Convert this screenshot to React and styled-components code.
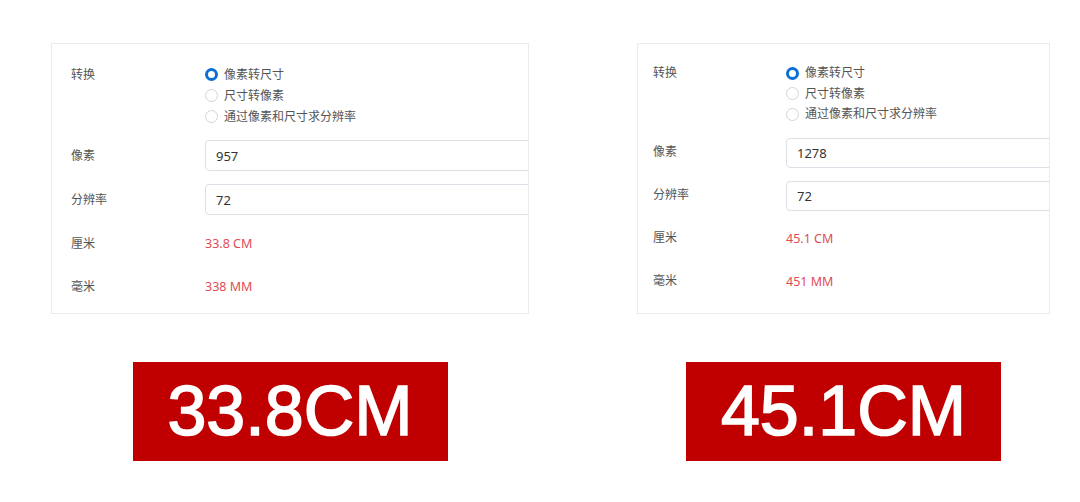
import React from "react";
import styled, { createGlobalStyle } from "styled-components";

const GlobalStyle = createGlobalStyle`
  * { box-sizing: border-box; }
  body {
    margin: 0;
    background: #fff;
    font-family: "Noto Sans", "Noto Sans CJK SC", sans-serif;
  }
`;

const Page = styled.div`
  width: 1080px;
  height: 502px;
  display: flex;
  padding-top: 43px;
`;

const Column = styled.div`
  width: ${(p) => p.$width}px;
  margin-left: ${(p) => p.$left}px;
  display: flex;
  flex-direction: column;
  align-items: center;
`;

const Card = styled.div`
  width: 100%;
  height: 271px;
  border: 1px solid #ebebeb;
  overflow: hidden;
  padding: ${(p) => p.$padTop}px 0 0 ${(p) => p.$padLeft}px;
  display: flex;
  flex-direction: column;
  gap: ${(p) => p.$gap}px;
  font-size: ${(p) => p.$font}px;
`;

const Row = styled.div`
  display: flex;
  align-items: ${(p) => (p.$top ? "flex-start" : "center")};
  min-height: ${(p) => p.$h}px;
`;

const Label = styled.div`
  width: ${(p) => p.$w}px;
  flex-shrink: 0;
  color: #555;
  line-height: ${(p) => p.$lh}px;
`;

const RadioGroup = styled.div`
  display: flex;
  flex-direction: column;
`;

const RadioItem = styled.div`
  display: flex;
  align-items: center;
  gap: 6px;
  color: #555;
  line-height: ${(p) => p.$lh}px;
`;

const Dot = styled.span`
  width: 13px;
  height: 13px;
  border-radius: 50%;
  flex-shrink: 0;
  border: ${(p) => (p.$on ? "3.5px solid #0b6fd4" : "1px solid #d4d4d4")};
  background: #fff;
`;

const Input = styled.div`
  width: 420px;
  flex-shrink: 0;
  height: ${(p) => p.$h}px;
  border: 1px solid #dcdfe6;
  border-radius: 4px;
  padding-left: 10px;
  display: flex;
  align-items: center;
  color: #333;
  font-size: 13px;
`;

const Result = styled.div`
  color: #e04b55;
  font-size: 12.5px;
`;

const Badge = styled.div`
  margin-top: 48px;
  width: 315px;
  height: 99px;
  background: #c00000;
  color: #fff;
  display: flex;
  align-items: center;
  justify-content: center;
  font-family: "Liberation Sans", Arial, sans-serif;
  font-size: 70px;
  font-weight: 400;
  -webkit-text-stroke: 1.6px #fff;
  padding-bottom: 2px;
`;

const panels = [
  {
    left: 51,
    width: 478,
    s: { padTop: 20, padLeft: 19, gap: 13, font: 12, lh: 21, inputH: 31, textH: 30, labelW: 134 },
    px: "957",
    cm: "33.8 CM",
    mm: "338 MM",
    badge: "33.8CM",
  },
  {
    left: 108,
    width: 413,
    s: { padTop: 19, padLeft: 15, gap: 13, font: 12, lh: 20.5, inputH: 30, textH: 30, labelW: 133 },
    px: "1278",
    cm: "45.1 CM",
    mm: "451 MM",
    badge: "45.1CM",
  },
];

const options = ["像素转尺寸", "尺寸转像素", "通过像素和尺寸求分辨率"];

const Panel = ({ data }) => {
  const { s } = data;
  return (
    <Column $left={data.left} $width={data.width}>
      <Card $padTop={s.padTop} $padLeft={s.padLeft} $gap={s.gap} $font={s.font}>
        <Row $top>
          <Label $w={s.labelW} $lh={s.lh}>转换</Label>
          <RadioGroup>
            {options.map((o, i) => (
              <RadioItem key={o} $lh={s.lh}>
                <Dot $on={i === 0} />
                {o}
              </RadioItem>
            ))}
          </RadioGroup>
        </Row>
        <Row $h={s.inputH}>
          <Label $w={s.labelW} $lh={s.lh}>像素</Label>
          <Input $h={s.inputH}>{data.px}</Input>
        </Row>
        <Row $h={s.inputH}>
          <Label $w={s.labelW} $lh={s.lh}>分辨率</Label>
          <Input $h={s.inputH}>72</Input>
        </Row>
        <Row $h={s.textH}>
          <Label $w={s.labelW} $lh={s.lh}>厘米</Label>
          <Result>{data.cm}</Result>
        </Row>
        <Row $h={s.textH}>
          <Label $w={s.labelW} $lh={s.lh}>毫米</Label>
          <Result>{data.mm}</Result>
        </Row>
      </Card>
      <Badge>{data.badge}</Badge>
    </Column>
  );
};

export default function App() {
  return (
    <>
      <GlobalStyle />
      <Page>
        {panels.map((p) => (
          <Panel key={p.badge} data={p} />
        ))}
      </Page>
    </>
  );
}
